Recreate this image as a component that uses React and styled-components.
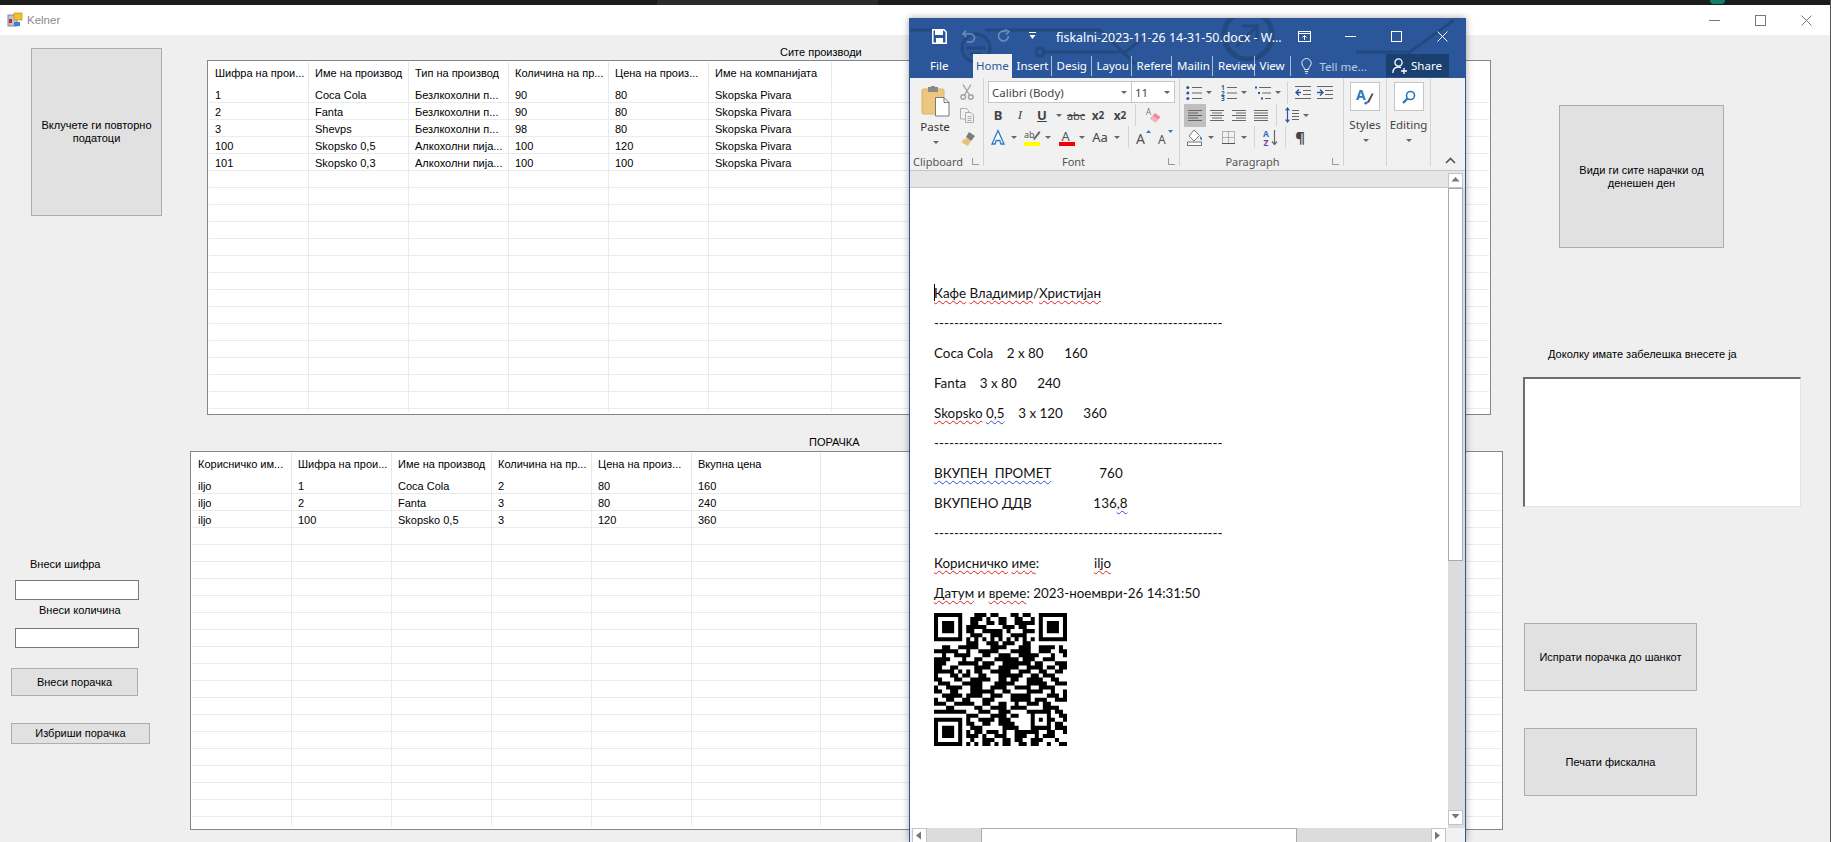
import React from 'react'
import styled, { createGlobalStyle } from 'styled-components'

const GlobalStyle = createGlobalStyle`
html, body {
    margin: 0;
    padding: 0;
    background: #efefef;
    overflow: hidden;
}
* { box-sizing: border-box; }
`;

const Screen = styled.div`
position: relative;
display: flex;
flex-direction: column;
width: 1831px;
height: 842px;
overflow: hidden;
font-family: "Liberation Sans", Arial, sans-serif;
font-size: 11px;
color: #000;
border-right: 1px solid #555;
`;

const TopStrip = styled.div`
display: flex;
flex: none;
height: 5px;
background: #1c1c1c;
`;

const StripTab = styled.div`
flex: none;
width: 221px;
margin-left: 657px;
background: #2b2b2b;
`;

const StripDot = styled.div`
flex: none;
width: 15px;
height: 4px;
margin-left: 832px;
border-radius: 0 0 8px 8px;
background: #0f7f6b;
`;

const FormTitle = styled.div`
display: flex;
flex: none;
align-items: center;
height: 30px;
padding-left: 8px;
background: #fff;
`;

const FormName = styled.span`
margin-left: 5px;
font-size: 11.5px;
color: #8a8a8a;
`;

const FormControls = styled.div`
display: flex;
align-items: center;
gap: 35px;
margin-left: auto;
margin-right: 18px;
`;

const Form = styled.div`
display: flex;
flex: 1;
min-height: 0;
background: #efefef;
`;

const SideColumn = styled.div`
display: flex;
flex: ${p => (p.$w ? `none` : 1)};
flex-direction: column;
align-items: flex-start;
width: ${p => (p.$w ? `${p.$w}px` : 'auto')};
`;

const MiddleColumn = styled.div`
display: flex;
flex: none;
flex-direction: column;
align-items: flex-start;
width: 1313px;
`;

const FormButton = styled.div`
display: flex;
flex: none;
align-items: center;
justify-content: center;
width: ${p => p.$w}px;
height: ${p => p.$h}px;
margin-top: ${p => p.$top}px;
margin-left: ${p => p.$left}px;
background: #e1e1e1;
border: 1px solid #adadad;
text-align: center;
line-height: 13px;
`;

const FieldLabel = styled.div`
flex: none;
height: 14px;
margin-top: ${p => p.$top}px;
margin-left: ${p => p.$left}px;
line-height: 14px;
white-space: nowrap;
`;

const TextField = styled.div`
flex: none;
width: 124px;
height: 20px;
margin-top: ${p => p.$top}px;
margin-left: 15px;
background: #fff;
border: 1px solid #7a7a7a;
`;

const NoteBox = styled.div`
flex: none;
width: 278px;
height: 130px;
margin-top: 16px;
margin-left: 20px;
background: #fff;
border-style: solid;
border-width: 2px 1px 1px 2px;
border-color: #6d6d6d #e3e3e3 #e3e3e3 #6d6d6d;
`;

const GridFrame = styled.div`
flex: none;
width: ${p => p.$w}px;
height: ${p => p.$h}px;
margin-top: ${p => p.$top}px;
margin-left: ${p => p.$left}px;
padding: 0 1px 2px 1px;
overflow: hidden;
background: #fff;
border: 1px solid #82878f;
`;

const GridClip = styled.div`
height: 100%;
overflow: hidden;
`;

const HeaderRow = styled.div`
display: flex;
height: 25px;
`;

const HeaderCell = styled.div`
flex: none;
width: ${p => p.$w}px;
margin-top: 1px;
padding-left: 6px;
line-height: 23px;
white-space: nowrap;
border-right: 1px solid #e6e6e6;
`;

const DataRow = styled.div`
display: flex;
height: 17px;
border-bottom: 1px solid #ebebeb;
`;

const DataCell = styled.div`
flex: none;
width: ${p => p.$w}px;
padding: 1px 0 0 6px;
line-height: 17px;
white-space: nowrap;
border-right: 1px solid #ebebeb;
`;

const Word = styled.div`
position: absolute;
left: 909px;
top: 18px;
display: flex;
flex-direction: column;
width: 557px;
height: 824px;
background: #2b579a;
border: solid #2b579a;
border-width: 0 1px;
box-shadow: 0 0 7px rgba(0, 0, 0, 0.35);
font-family: "Noto Sans", "Open Sans", sans-serif;
`;

const Circuit = styled.svg`
position: absolute;
left: 0;
top: 0;
pointer-events: none;
`;

const WordTitle = styled.div`
position: relative;
display: flex;
flex: none;
align-items: center;
height: 36px;
padding-left: 22px;
color: #fff;
`;

const QuickGap = styled.span`
display: inline-flex;
flex: none;
margin-left: ${p => p.$ml}px;
`;

const DocName = styled.span`
flex: none;
width: 210px;
margin-left: 20px;
margin-top: 3px;
font-size: 12.4px;
white-space: nowrap;
`;

const TabRow = styled.div`
position: relative;
display: flex;
flex: none;
align-items: stretch;
height: 24px;
color: #fff;
font-size: 11.5px;
`;

const Tab = styled.div`
flex: none;
width: ${p => p.$w}px;
margin: ${p => (p.$active ? '0' : '2px 0')};
padding-left: ${p => p.$pad}px;
line-height: ${p => (p.$active ? '24px' : '20px')};
white-space: nowrap;
background: ${p => (p.$active ? '#f1f1f1' : 'transparent')};
color: ${p => (p.$active ? '#2b579a' : '#fff')};
border-right: ${p => (p.$line ? '1px solid #a9bcd8' : '0')};
`;

const TellMe = styled.div`
display: flex;
flex: none;
align-items: center;
gap: 8px;
width: 95px;
padding-left: 10px;
color: #b9cbe6;
`;

const ShareBox = styled.div`
display: flex;
flex: none;
align-items: center;
justify-content: center;
gap: 4px;
width: 63px;
height: 23px;
background: #19406f;
color: #fff;
`;

const Ribbon = styled.div`
display: flex;
flex: none;
height: 93px;
background: #f1f1f1;
border-bottom: 1px solid #c6c6c6;
color: #444;
font-size: 11.5px;
`;

const Group = styled.div`
display: flex;
flex: none;
flex-direction: column;
width: ${p => p.$w}px;
height: 88px;
border-right: 1px solid #d4d4d4;
`;

const GroupBody = styled.div`
display: flex;
flex: 1;
flex-direction: ${p => (p.$row ? 'row' : 'column')};
padding-top: 3px;
min-height: 0;
`;

const GroupLabel = styled.div`
position: relative;
flex: none;
height: 15px;
padding-left: ${p => p.$pad || 0}px;
padding-right: ${p => p.$pr || 0}px;
text-align: ${p => (p.$left ? 'left' : 'center')};
font-size: 11px;
line-height: 21px;
color: #555;
white-space: nowrap;
`;

const Launcher = styled.span`
position: absolute;
right: 4px;
top: 7px;
width: 7px;
height: 7px;
border-left: 1px solid #999;
border-bottom: 1px solid #999;
`;

const PasteBlock = styled.div`
display: flex;
flex: none;
flex-direction: column;
align-items: center;
width: 50px;
padding-top: 5px;
color: #333;
`;

const PasteLabel = styled.div`
margin-top: 1px;
margin-bottom: 5px;
line-height: 18px;
`;

const ClipTools = styled.div`
display: flex;
flex: none;
flex-direction: column;
gap: 8px;
padding-top: 3px;
`;

const ToolRow = styled.div`
display: flex;
flex: none;
align-items: center;
height: ${p => p.$h || 22}px;
`;

const Tool = styled.div`
display: flex;
flex: none;
align-items: center;
justify-content: center;
width: ${p => p.$w}px;
height: ${p => (p.$on ? 23 : 22)}px;
margin-left: ${p => p.$ml || 0}px;
background: ${p => (p.$on ? '#bfbfbf' : 'transparent')};
color: #444;
font-size: ${p => p.$size || 13}px;
font-weight: ${p => (p.$bold ? 700 : 400)};
font-style: ${p => (p.$italic ? 'italic' : 'normal')};
font-family: ${p => (p.$serif ? '"Liberation Serif", serif' : 'inherit')};
text-decoration: ${p => (p.$under ? 'underline' : p.$strike ? 'line-through' : 'none')};
`;

const Caret = styled.span`
flex: none;
width: 0;
height: 0;
margin-left: ${p => p.$ml || 4}px;
margin-right: ${p => p.$mr || 3}px;
border-left: 3px solid transparent;
border-right: 3px solid transparent;
border-top: 3px solid #666;
`;

const RowSep = styled.span`
flex: none;
width: 1px;
height: 22px;
margin-left: ${p => p.$ml}px;
background: #d4d4d4;
`;

const ComboRow = styled.div`
display: flex;
flex: none;
height: 22px;
margin-left: 4px;
margin-bottom: 1px;
`;

const Combo = styled.div`
display: flex;
flex: none;
align-items: center;
justify-content: space-between;
width: ${p => p.$w}px;
height: 22px;
padding: 0 1px 0 3px;
background: #fff;
border: 1px solid #c6c6c6;
border-left-width: ${p => (p.$joined ? 0 : 1)}px;
color: #444;
font-size: 11.5px;
white-space: nowrap;
`;

const StackGroup = styled.div`
display: flex;
flex: 1;
flex-direction: column;
align-items: center;
color: #444;
`;

const StackIcon = styled.div`
display: flex;
flex: none;
align-items: center;
justify-content: center;
width: 30px;
height: 29px;
margin-top: 4px;
background: #fff;
border: 1px solid #c6c6c6;
`;

const StackLabel = styled.div`
margin-top: 5px;
margin-bottom: 5px;
line-height: 18px;
`;

const Collapse = styled.div`
display: flex;
flex: 1;
align-items: flex-end;
justify-content: flex-end;
padding: 0 9px 6px 0;
`;

const Workspace = styled.div`
display: flex;
flex: 1;
min-height: 0;
background: #fff;
`;

const DocColumn = styled.div`
display: flex;
flex: 1;
flex-direction: column;
min-width: 0;
`;

const RulerBar = styled.div`
flex: none;
height: 17px;
background: #e6e6e6;
border-bottom: 1px solid #c6c6c6;
`;

const DocPage = styled.div`
position: relative;
flex: 1;
padding: 90px 0 0 24px;
font-family: Lato, "Noto Sans", sans-serif;
font-size: 13.4px;
color: #111;
`;

const TextCursor = styled.span`
position: absolute;
left: 24px;
top: 96px;
width: 1px;
height: 17px;
background: #000;
`;

const DocLine = styled.div`
height: 30px;
line-height: 30px;
white-space: pre;
`;

const Spell = styled.span`
text-decoration: underline wavy ${p => (p.$blue ? '#2f4fd0' : '#e02020')};
text-decoration-thickness: 1px;
text-underline-offset: 2px;
`;

const QrCode = styled.svg`
display: block;
margin-top: 5px;
`;

const VScroll = styled.div`
display: flex;
flex: none;
flex-direction: column;
align-items: flex-start;
width: 17px;
background: #dcdcdc;
`;

const VTop = styled.div`
flex: none;
width: 100%;
height: 17px;
padding-top: 2px;
background: #e6e6e6;
`;

const ScrollArrow = styled.div`
display: flex;
flex: none;
align-items: center;
justify-content: center;
width: 15px;
height: 15px;
margin-top: ${p => p.$mt || 0}px;
background: #fff;
border: 1px solid #c4c4c4;
`;

const VThumb = styled.div`
flex: none;
width: 15px;
height: 373px;
background: #fff;
border: 1px solid #ababab;
`;

const HScrollRow = styled.div`
display: flex;
flex: none;
align-items: stretch;
height: 14px;
background: #f1f1f1;
`;

const HTrack = styled.div`
display: flex;
flex: none;
width: 534px;
margin-left: 2px;
background: #dcdcdc;
`;

const HThumb = styled.div`
flex: none;
width: 316px;
margin-left: 54px;
margin-right: 134px;
background: #fff;
border: 1px solid #ababab;
border-bottom: 0;
`;

const Glyph = styled.svg`
display: block;
flex: none;
overflow: visible;
`;

const AppIcon = () => (
    <Glyph width="14" height="14" viewBox="0 0 14 14">
        <rect x="0" y="2" width="9" height="11" fill="#b9c4d6" stroke="#7c8794" />
        <rect x="1" y="6" width="3" height="4" fill="#c8281e" />
        <rect x="6" y="0" width="8" height="7" fill="#f2c02e" stroke="#c4901a" strokeWidth="0.7" />
        <rect x="6" y="9" width="6" height="4" fill="#3f7fd6" />
    </Glyph>
);

const ThinMin = ({ color = '#777', w = 11 }) => (
    <Glyph width={w} height="11" viewBox="0 0 11 11"><path d="M0 5.5H11" stroke={color} /></Glyph>
);

const ThinMax = ({ color = '#777' }) => (
    <Glyph width="11" height="11" viewBox="0 0 11 11"><rect x="0.5" y="0.5" width="10" height="10" fill="none" stroke={color} /></Glyph>
);

const ThinClose = ({ color = '#777' }) => (
    <Glyph width="11" height="11" viewBox="0 0 11 11"><path d="M0.5 0.5L10.5 10.5M10.5 0.5L0.5 10.5" stroke={color} /></Glyph>
);

const SaveIcon = () => (
    <Glyph width="15" height="15" viewBox="0 0 15 15">
        <path d="M0.8 0.8H12L14.2 3V14.2H0.8Z" fill="none" stroke="#fff" strokeWidth="1.5" />
        <rect x="3" y="1" width="8" height="5" fill="#fff" />
        <rect x="4" y="9" width="7" height="5" fill="#fff" />
    </Glyph>
);

const UndoIcon = () => (
    <Glyph width="14" height="14" viewBox="0 0 14 14" fill="none" stroke="#6d8dbb" strokeWidth="1.6">
        <path d="M4 1.5L1 5L4.5 8" />
        <path d="M1.5 5H8.5A4 4 0 0 1 8.5 13H5" />
    </Glyph>
);

const RedoIcon = () => (
    <Glyph width="14" height="14" viewBox="0 0 14 14" fill="none" stroke="#6d8dbb" strokeWidth="1.6">
        <path d="M11.5 7A5 5 0 1 1 9 2.6" />
        <path d="M8 0.5L12 2.5L9 5.5" />
    </Glyph>
);

const QuickCaret = () => (
    <Glyph width="7" height="8" viewBox="0 0 7 8"><path d="M0 0.5H7" stroke="#fff" /><path d="M0.5 3H6.5L3.5 7Z" fill="#fff" /></Glyph>
);

const RestoreRibbon = () => (
    <Glyph width="13" height="11" viewBox="0 0 13 11" fill="none" stroke="#fff">
        <rect x="0.5" y="0.5" width="12" height="10" />
        <path d="M0.5 2.5H12.5M6.5 9V4.5M4.5 6.5L6.5 4.5L8.5 6.5" />
    </Glyph>
);

const BulbIcon = () => (
    <Glyph width="11" height="16" viewBox="0 0 11 16" fill="none" stroke="#e6edf7">
        <path d="M3.5 11.5C3.5 9 0.8 8 0.8 5.2A4.7 4.7 0 0 1 10.2 5.2C10.2 8 7.5 9 7.5 11.5Z" />
        <path d="M3.8 13.5H7.2M4.5 15.3H6.5" />
    </Glyph>
);

const ShareIcon = () => (
    <Glyph width="15" height="16" viewBox="0 0 15 16" fill="none" stroke="#fff" strokeWidth="1.3">
        <circle cx="6.5" cy="4.5" r="3.6" />
        <path d="M0.8 15C1 11 3.5 9 6.5 9C7.5 9 8.3 9.2 9 9.6M9 13H15M12 10V16" />
    </Glyph>
);

const PasteIcon = () => (
    <Glyph width="29" height="31" viewBox="0 0 29 31">
        <rect x="1" y="3" width="22" height="25" rx="1.5" fill="#edc77f" stroke="#d9b26a" />
        <rect x="7" y="1" width="10" height="5" fill="#8a8a8a" />
        <rect x="10" y="0" width="4" height="2" fill="#8a8a8a" />
        <path d="M14.5 11.5H23L28 16.5V30H14.5Z" fill="#fff" stroke="#7a7a7a" />
        <path d="M23 11.5V16.5H28" fill="none" stroke="#7a7a7a" />
    </Glyph>
);

const ScissorsIcon = () => (
    <Glyph width="14" height="16" viewBox="0 0 14 16" fill="none" stroke="#a2a2a2" strokeWidth="1.4">
        <path d="M3 0.5L9.5 11M11 0.5L4.5 11" />
        <circle cx="3.2" cy="13" r="2.3" />
        <circle cx="10.8" cy="13" r="2.3" />
    </Glyph>
);

const CopyIcon = () => (
    <Glyph width="14" height="15" viewBox="0 0 14 15" fill="#f1f1f1" stroke="#adadad">
        <path d="M0.5 0.5H6.5L8.5 2.5V11H0.5Z" />
        <path d="M5.5 4.5H11L13.5 7V14.5H5.5Z" />
        <path d="M7.5 8.5H11.5M7.5 10.5H11.5M7.5 12.5H11.5" />
    </Glyph>
);

const PainterIcon = () => (
    <Glyph width="16" height="16" viewBox="0 0 16 16">
        <path d="M9 1L15 5L11 10L6 6Z" fill="#7b7b7b" />
        <path d="M6 6L11 10L8 15L1 11L3 10L2 8L5 9Z" fill="#e8bf7a" />
    </Glyph>
);

const ListIcon = ({ kind }) => (
    <Glyph width="16" height="16" viewBox="0 0 16 16">
        {[2.5, 8, 13.5].map((y, i) => (
            <g key={y}>
                {kind === 'bullets' && <circle cx="1.8" cy={y} r="1.5" fill="#2b579a" />}
                {kind === 'numbers' && <text x="0" y={y + 2.5} fontSize="6.5" fontWeight="700" fill="#2b579a">{i + 1}</text>}
                {kind === 'multi' && <rect x={i * 3} y={y - 1} width="2" height="2" fill="#2b579a" />}
                <path d={`M${kind === 'multi' ? 4 + i * 3 : 6} ${y}H16`} stroke="#666" />
            </g>
        ))}
    </Glyph>
);

const IndentIcon = ({ flip }) => (
    <Glyph width="16" height="13" viewBox="0 0 16 13">
        <path d="M0 0.5H16M8 4.5H16M8 8.5H16M0 12.5H16" stroke="#666" />
        <path d={flip ? 'M0 6.5H5M3 3.5L6 6.5L3 9.5' : 'M6 6.5H1M4 3.5L1 6.5L4 9.5'} fill="none" stroke="#2b579a" strokeWidth="1.4" />
    </Glyph>
);

const AlignIcon = ({ mode }) => {
    const rows = [14, 10, 14, 10, 14];
    return (
        <Glyph width="14" height="11" viewBox="0 0 14 11">
            {rows.map((w, i) => {
                const len = mode === 'justify' ? 14 : w;
                const x = mode === 'center' ? (14 - len) / 2 : mode === 'right' ? 14 - len : 0;
                return <path key={i} d={`M${x} ${i * 2.5 + 0.5}H${x + len}`} stroke="#666" />
            })}
        </Glyph>
    )
};

const LineSpacingIcon = () => (
    <Glyph width="14" height="16" viewBox="0 0 14 16">
        <path d="M2.5 1V15M0.5 3.5L2.5 1L4.5 3.5M0.5 12.5L2.5 15L4.5 12.5" fill="none" stroke="#2b579a" strokeWidth="1.2" />
        <path d="M7 3.5H14M7 6.5H14M7 9.5H14M7 12.5H14" stroke="#666" />
    </Glyph>
);

const ShadingIcon = () => (
    <Glyph width="17" height="17" viewBox="0 0 17 17">
        <path d="M7 1L12.5 6.5L7 12L2 7Z" fill="#fff" stroke="#777" />
        <path d="M13.5 7C15 9 15.5 10 14.5 11C13.5 11.5 12.5 10 13.5 7Z" fill="#2b79c2" />
        <rect x="0.5" y="13" width="14" height="3.5" fill="#fff" stroke="#777" />
    </Glyph>
);

const BordersIcon = () => (
    <Glyph width="13" height="13" viewBox="0 0 13 13">
        <path d="M0.5 0.5H12.5V12.5H0.5ZM6.5 0.5V12.5M0.5 6.5H12.5" fill="none" stroke="#777" strokeDasharray="1 1" />
        <path d="M0 12.5H13" stroke="#555" />
    </Glyph>
);

const SortIcon = () => (
    <Glyph width="15" height="17" viewBox="0 0 15 17">
        <text x="0" y="7.5" fontSize="8.5" fontWeight="700" fill="#2b79c2">A</text>
        <text x="0.5" y="16.5" fontSize="8.5" fontWeight="700" fill="#7a3fa8">Z</text>
        <path d="M11.5 1V15M9 12.5L11.5 15.5L14 12.5" fill="none" stroke="#666" strokeWidth="1.2" />
    </Glyph>
);

const EraserIcon = () => (
    <Glyph width="15" height="15" viewBox="0 0 15 15">
        <text x="0" y="7" fontSize="8" fill="#777">A</text>
        <path d="M9 5L14.5 9L9.5 14.5L4 10.5Z" fill="#ee8b9b" />
        <path d="M4 10.5L6.5 7.8L12 11.8L9.5 14.5Z" fill="#f5b3be" />
    </Glyph>
);

const HighlightIcon = () => (
    <Glyph width="17" height="17" viewBox="0 0 17 17">
        <text x="0" y="9" fontSize="9" fill="#555">ab</text>
        <path d="M9 10L15 2L16.5 3.5L10.5 11Z" fill="#666" />
        <rect x="0" y="13" width="16" height="4" fill="#ffff00" />
    </Glyph>
);

const FontColorIcon = () => (
    <Glyph width="16" height="17" viewBox="0 0 16 17">
        <text x="2.5" y="11.5" fontSize="13" fill="#555">A</text>
        <rect x="0" y="13" width="16" height="4" fill="#f00000" />
    </Glyph>
);

const EffectIcon = () => (
    <Glyph width="16" height="16" viewBox="0 0 16 16">
        <path d="M8 1.5L14 15H11L9.8 11.5H6.2L5 15H2Z" fill="#fff" stroke="#2b79c2" strokeWidth="1.3" />
    </Glyph>
);

const GrowIcon = ({ down }) => (
    <Glyph width="15" height="16" viewBox="0 0 15 16">
        <text x="0" y="15" fontSize={down ? 12 : 14} fill="#555">A</text>
        <path d={down ? 'M10 1H15L12.5 4Z' : 'M10 4H15L12.5 1Z'} fill="#2b79c2" />
    </Glyph>
);

const StylesIcon = () => (
    <Glyph width="18" height="18" viewBox="0 0 18 18">
        <text x="0" y="12" fontSize="14" fontWeight="700" fill="#2b79c2">A</text>
        <path d="M11 14L16 5L17.5 6L13 15Z" fill="#555" />
        <path d="M8 16C9 13 10.5 13 12 14C12 16 10 17 8 16Z" fill="#2b79c2" />
    </Glyph>
);

const FindIcon = () => (
    <Glyph width="14" height="14" viewBox="0 0 14 14" fill="none" stroke="#2b79c2" strokeWidth="1.6">
        <circle cx="8.5" cy="5.5" r="4" />
        <path d="M5.5 8.5L1 13" strokeWidth="2.4" />
    </Glyph>
);

const SmallArrow = ({ dir }) => {
    const shapes = {
        up: 'M0.5 5.5L4.5 1L8.5 5.5Z',
        down: 'M0.5 1L4.5 5.5L8.5 1Z',
        left: 'M6 0.5L1 4.5L6 8.5Z',
        right: 'M1 0.5L6 4.5L1 8.5Z',
    };
    return <Glyph width="9" height="9" viewBox="0 0 9 9"><path d={shapes[dir]} fill="#777" /></Glyph>
};

const ChevronUp = () => (
    <Glyph width="11" height="7" viewBox="0 0 11 7"><path d="M1 6L5.5 1.5L10 6" fill="none" stroke="#555" strokeWidth="1.6" /></Glyph>
);

const qrRows = [
    '000000000011101100011011001000000',
    '000000000111010011001100110000000',
    '000000000110011011001111100000000',
    '000000001111100001110110000000000',
    '000000001100111110100011100000000',
    '000000000111001110011110000000000',
    '000000000000000000000000000000000',
    '000000001110011101110011000000000',
    '001100011110001111000111001111010',
    '111111001001111100011111001110011',
    '001001111000110011100111110001001',
    '111100110011000111111011100111000',
    '111000011110111001111111011000111',
    '110011100011110011111001111011011',
    '111110001011001111100111001100110',
    '100011111001100011111100110111000',
    '110001100111110011011001111001100',
    '011100011111000111110001111100111',
    '100111000111001111001111001111000',
    '110011100111111001100001111001001',
    '001111001111001110011111000011101',
    '100110011000111000011111011100111',
    '111001111100110011001001110110000',
    '000110000011001111011110000111100',
    '111111110001110011100001111000110',
    '000000001110001111011000000100011',
    '000000001001111011100000000011001',
    '000000001100110011110000000000110',
    '000000000111000001111000000100111',
    '000000001011011101001111110011001',
    '000000001110100111001110010111000',
    '000000000100111001101100111000100',
    '000000001010110101100110110010011',
];

const finder = (x, y) => `M${x} ${y}h7v7h-7zM${x + 1} ${y + 1}v5h5v-5zM${x + 2} ${y + 2}h3v3h-3z`;

const qrPath = () => {
    let d = '';
    qrRows.forEach((row, y) => {
        row.split('').forEach((bit, x) => {
            const inFinder = (y < 8 && x < 8) || (y < 8 && x > 24) || (y > 24 && x < 8);
            const inAlign = x >= 24 && x <= 28 && y >= 24 && y <= 28;
            if (bit === '1' && !inFinder && !inAlign && y !== 6 && x !== 6) d += `M${x} ${y}h1v1h-1z`;
        });
    });
    for (let i = 8; i <= 24; i += 2) d += `M${i} 6h1v1h-1zM6 ${i}h1v1h-1z`;
    d += finder(0, 0) + finder(26, 0) + finder(0, 26);
    d += 'M24 24h5v5h-5zM25 25v3h3v-3zM26 26h1v1h-1z';
    return d;
};

const QR = () => (
    <QrCode width="133" height="133" viewBox="0 0 33 33">
        <path d={qrPath()} fill="#000" fillRule="evenodd" />
    </QrCode>
);

const productCols = [100, 100, 100, 100, 100, 123];
const productHead = ['Шифра на прои...', 'Име на производ', 'Тип на производ', 'Количина на пр...', 'Цена на произ...', 'Име на компанијата'];
const productRows = [
    ['1', 'Coca Cola', 'Безлкохолни п...', '90', '80', 'Skopska Pivara'],
    ['2', 'Fanta', 'Безлкохолни п...', '90', '80', 'Skopska Pivara'],
    ['3', 'Shevps', 'Безлкохолни п...', '98', '80', 'Skopska Pivara'],
    ['100', 'Skopsko 0,5', 'Алкохолни пија...', '100', '120', 'Skopska Pivara'],
    ['101', 'Skopsko 0,3', 'Алкохолни пија...', '100', '100', 'Skopska Pivara'],
];

const orderCols = [100, 100, 100, 100, 100, 129];
const orderHead = ['Корисничко им...', 'Шифра на прои...', 'Име на производ', 'Количина на пр...', 'Цена на произ...', 'Вкупна цена'];
const orderRows = [
    ['iljo', '1', 'Coca Cola', '2', '80', '160'],
    ['iljo', '2', 'Fanta', '3', '80', '240'],
    ['iljo', '100', 'Skopsko 0,5', '3', '120', '360'],
];

const DataGrid = ({ cols, head, rows, total, w, h, top, left }) => {
    const filled = [...rows, ...Array(total - rows.length).fill(null)];
    return (
        <GridFrame $w={w} $h={h} $top={top} $left={left}>
            <GridClip>
                <HeaderRow>
                    {head.map((label, i) => <HeaderCell key={i} $w={cols[i]}>{label}</HeaderCell>)}
                </HeaderRow>
                {filled.map((row, r) => (
                    <DataRow key={r}>
                        {cols.map((cw, i) => <DataCell key={i} $w={cw}>{row ? row[i] : ''}</DataCell>)}
                    </DataRow>
                ))}
            </GridClip>
        </GridFrame>
    )
};

const tabs = [
    ['Insert', 40], ['Desig', 40], ['Layou', 40], ['Refere', 40.5], ['Mailin', 41], ['Review', 41.5], ['View', 36],
];

const dashes = '-'.repeat(58);

const WordWindow = () => (
    <Word>
        <Circuit width="555" height="60" viewBox="0 0 555 60" fill="none" stroke="#24497f" strokeWidth="3">
            <circle cx="338" cy="17" r="24" strokeWidth="5" />
            <path d="M326 29L346 9M332 8H347V23" />
            <circle cx="66" cy="30" r="14" />
            <path d="M56 30H76M60 36H72" />
            <circle cx="130" cy="34" r="4" />
            <path d="M134 34H216L232 20M75 12H190L225 46M0 12H28" />
            <path d="M544 2L500 34H446" />
        </Circuit>
        <WordTitle>
            <SaveIcon />
            <QuickGap $ml={15}><UndoIcon /></QuickGap>
            <QuickGap $ml={21}><RedoIcon /></QuickGap>
            <QuickGap $ml={18}><QuickCaret /></QuickGap>
            <DocName>fiskalni-2023-11-26 14-31-50.docx - W...</DocName>
            <QuickGap $ml={32}><RestoreRibbon /></QuickGap>
            <QuickGap $ml={34}><ThinMin color="#fff" /></QuickGap>
            <QuickGap $ml={35}><ThinMax color="#fff" /></QuickGap>
            <QuickGap $ml={35}><ThinClose color="#fff" /></QuickGap>
        </WordTitle>
        <TabRow>
            <Tab $w={63} $pad={20}>File</Tab>
            <Tab $w={38.5} $pad={3} $active>Home</Tab>
            {tabs.map(([name, w], i) => <Tab key={name} $w={w} $pad={5} $line>{name}</Tab>)}
            <TellMe><BulbIcon />Tell me...</TellMe>
            <ShareBox><ShareIcon />Share</ShareBox>
        </TabRow>
        <Ribbon>
            <Group $w={74}>
                <GroupBody $row>
                    <PasteBlock>
                        <PasteIcon />
                        <PasteLabel>Paste</PasteLabel>
                        <Caret $ml={0} $mr={0} />
                    </PasteBlock>
                    <ClipTools>
                        <ScissorsIcon />
                        <CopyIcon />
                        <PainterIcon />
                    </ClipTools>
                </GroupBody>
                <GroupLabel $left $pad={3}>Clipboard<Launcher /></GroupLabel>
            </Group>
            <Group $w={196}>
                <GroupBody>
                    <ComboRow>
                        <Combo $w={144}>Calibri (Body)<Caret $ml={0} /></Combo>
                        <Combo $w={43} $joined>11<Caret $ml={0} /></Combo>
                    </ComboRow>
                    <ToolRow>
                        <Tool $w={20} $ml={4} $bold>B</Tool>
                        <Tool $w={24} $italic $serif>I</Tool>
                        <Tool $w={20} $bold $under>U</Tool>
                        <Caret />
                        <Tool $w={22} $size={11} $strike>abc</Tool>
                        <Tool $w={22} $size={12} $bold>x<sub>2</sub></Tool>
                        <Tool $w={22} $size={12} $bold>x<sup>2</sup></Tool>
                        <RowSep $ml={4} />
                        <Tool $w={16} $ml={9}><EraserIcon /></Tool>
                    </ToolRow>
                    <ToolRow>
                        <Tool $w={18} $ml={5}><EffectIcon /></Tool>
                        <Caret />
                        <Tool $w={17} $ml={4}><HighlightIcon /></Tool>
                        <Caret />
                        <Tool $w={17} $ml={4}><FontColorIcon /></Tool>
                        <Caret />
                        <Tool $w={20} $ml={2} $size={13}>Aa</Tool>
                        <Caret />
                        <RowSep $ml={5} />
                        <Tool $w={16} $ml={6}><GrowIcon /></Tool>
                        <Tool $w={16} $ml={6}><GrowIcon down /></Tool>
                    </ToolRow>
                </GroupBody>
                <GroupLabel $pr={16}>Font<Launcher /></GroupLabel>
            </Group>
            <Group $w={164}>
                <GroupBody>
                    <ToolRow $h={23}>
                        <Tool $w={16} $ml={6}><ListIcon kind="bullets" /></Tool>
                        <Caret />
                        <Tool $w={16} $ml={6}><ListIcon kind="numbers" /></Tool>
                        <Caret />
                        <Tool $w={16} $ml={5}><ListIcon kind="multi" /></Tool>
                        <Caret />
                        <RowSep $ml={3} />
                        <Tool $w={16} $ml={7}><IndentIcon /></Tool>
                        <Tool $w={16} $ml={6}><IndentIcon flip /></Tool>
                    </ToolRow>
                    <ToolRow>
                        <Tool $w={22} $ml={4} $on><AlignIcon mode="left" /></Tool>
                        <Tool $w={22}><AlignIcon mode="center" /></Tool>
                        <Tool $w={22}><AlignIcon mode="right" /></Tool>
                        <Tool $w={22}><AlignIcon mode="justify" /></Tool>
                        <RowSep $ml={4} />
                        <Tool $w={14} $ml={8}><LineSpacingIcon /></Tool>
                        <Caret />
                    </ToolRow>
                    <ToolRow>
                        <Tool $w={18} $ml={6}><ShadingIcon /></Tool>
                        <Caret />
                        <Tool $w={17} $ml={3}><BordersIcon /></Tool>
                        <Caret />
                        <RowSep $ml={4} />
                        <Tool $w={16} $ml={7}><SortIcon /></Tool>
                        <RowSep $ml={7} />
                        <Tool $w={14} $ml={7} $size={15} $bold>¶</Tool>
                    </ToolRow>
                </GroupBody>
                <GroupLabel $pr={18}>Paragraph<Launcher /></GroupLabel>
            </Group>
            <Group $w={43}>
                <StackGroup>
                    <StackIcon><StylesIcon /></StackIcon>
                    <StackLabel>Styles</StackLabel>
                    <Caret $ml={0} $mr={0} />
                </StackGroup>
            </Group>
            <Group $w={44}>
                <StackGroup>
                    <StackIcon><FindIcon /></StackIcon>
                    <StackLabel>Editing</StackLabel>
                    <Caret $ml={0} $mr={0} />
                </StackGroup>
            </Group>
            <Collapse><ChevronUp /></Collapse>
        </Ribbon>
        <Workspace>
            <DocColumn>
                <RulerBar />
                <DocPage>
                    <TextCursor />
                    <DocLine><Spell>Кафе</Spell> <Spell>Владимир</Spell>/<Spell>Христијан</Spell></DocLine>
                    <DocLine>{dashes}</DocLine>
                    <DocLine>Coca Cola    2 x 80      160</DocLine>
                    <DocLine>Fanta    3 x 80      240</DocLine>
                    <DocLine><Spell>Skopsko</Spell> <Spell $blue>0,5</Spell>    3 x 120      360</DocLine>
                    <DocLine>{dashes}</DocLine>
                    <DocLine><Spell $blue>ВКУПЕН  ПРОМЕТ</Spell>              760</DocLine>
                    <DocLine>ВКУПЕНО ДДВ                  136<Spell $blue>,8</Spell></DocLine>
                    <DocLine>{dashes}</DocLine>
                    <DocLine><Spell>Корисничко</Spell> <Spell>име</Spell>:                <Spell>iljo</Spell></DocLine>
                    <DocLine><Spell>Датум</Spell> и <Spell>време</Spell>: 2023-ноември-26 14:31:50</DocLine>
                    <QR />
                </DocPage>
            </DocColumn>
            <VScroll>
                <VTop><ScrollArrow><SmallArrow dir="up" /></ScrollArrow></VTop>
                <VThumb />
                <ScrollArrow $mt={249}><SmallArrow dir="down" /></ScrollArrow>
            </VScroll>
        </Workspace>
        <HScrollRow>
            <HTrack>
                <ScrollArrow><SmallArrow dir="left" /></ScrollArrow>
                <HThumb />
                <ScrollArrow><SmallArrow dir="right" /></ScrollArrow>
            </HTrack>
        </HScrollRow>
    </Word>
);

const App = () => {
    return (
        <Screen>
            <GlobalStyle />
            <TopStrip>
                <StripTab />
                <StripDot />
            </TopStrip>
            <FormTitle>
                <AppIcon />
                <FormName>Kelner</FormName>
                <FormControls>
                    <ThinMin />
                    <ThinMax />
                    <ThinClose />
                </FormControls>
            </FormTitle>
            <Form>
                <SideColumn $w={190}>
                    <FormButton $w={131} $h={168} $top={13} $left={31}>Вклучете ги повторно<br />податоци</FormButton>
                    <FieldLabel $top={341} $left={30}>Внеси шифра</FieldLabel>
                    <TextField $top={9} />
                    <FieldLabel $top={3} $left={39}>Внеси количина</FieldLabel>
                    <TextField $top={11} />
                    <FormButton $w={127} $h={28} $top={20} $left={11}>Внеси порачка</FormButton>
                    <FormButton $w={139} $h={21} $top={27} $left={11}>Избриши порачка</FormButton>
                </SideColumn>
                <MiddleColumn>
                    <FieldLabel $top={10} $left={590}>Сите производи</FieldLabel>
                    <DataGrid cols={productCols} head={productHead} rows={productRows} total={20} w={1284} h={355} top={1} left={17} />
                    <FieldLabel $top={20} $left={619}>ПОРАЧКА</FieldLabel>
                    <DataGrid cols={orderCols} head={orderHead} rows={orderRows} total={22} w={1313} h={379} top={2} left={0} />
                </MiddleColumn>
                <SideColumn>
                    <FormButton $w={165} $h={143} $top={70} $left={56}>Види ги сите нарачки од<br />денешен ден</FormButton>
                    <FieldLabel $top={99} $left={45}>Доколку имате забелешка внесете ја</FieldLabel>
                    <NoteBox />
                    <FormButton $w={173} $h={68} $top={116} $left={21}>Испрати порачка до шанкот</FormButton>
                    <FormButton $w={173} $h={68} $top={37} $left={21}>Печати фискална</FormButton>
                </SideColumn>
            </Form>
            <WordWindow />
        </Screen>
    )
}

export default App;
